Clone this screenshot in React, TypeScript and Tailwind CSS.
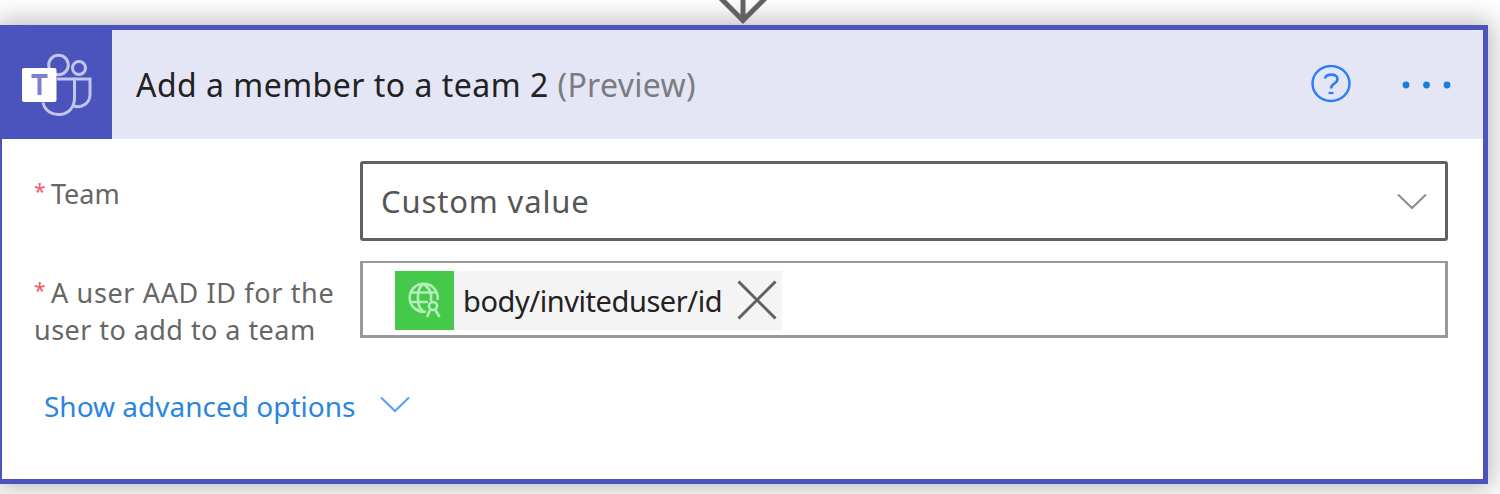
import type { ReactNode } from "react";

function TeamsIcon() {
  return (
    <svg className="h-[66px] w-[74px]" viewBox="0 0 74 66" fill="none">
      <g stroke="#c3c6eb" strokeWidth="3">
        <circle cx="37.500" cy="13" r="9.800" />
        <circle cx="58" cy="16" r="6.500" />
        <path d="M36 27h17.500v19c0 21-28 21.500-31.500 4.500" />
        <path d="M53.500 27H69v16a12 12 0 0 1-16 11" />
      </g>
      <rect x="1" y="16" width="34.500" height="34" rx="2" fill="#fff" />
      <path d="M10.500 24h16M18.500 24v19" stroke="#7b80d0" strokeWidth="4" />
    </svg>
  );
}

function GlobeIcon() {
  return (
    <svg className="h-[37px] w-[34px]" viewBox="0 0 34 37" fill="none" stroke="#b6eeba" strokeWidth="2.600">
      <path d="M18 29.500A14 14 0 1 1 29.500 18" />
      <path d="M15.500 29.500C8 25 8 6 15.500 2c7 4 8.500 10 7.500 17M3 10.500h25M3 20h17" />
      <circle cx="25" cy="24" r="4" />
      <path d="M22 28l-3 7M27.500 28l4 7" />
    </svg>
  );
}

function Chevron({ className }: { className: string }) {
  return (
    <svg className={className} viewBox="0 0 32 17" fill="none" stroke="currentColor" strokeWidth="2">
      <path d="M2 1.500 16 15 30 1.500" />
    </svg>
  );
}

function FieldLabel({ children }: { children: ReactNode }) {
  return (
    <div className="w-[326px] shrink-0 whitespace-nowrap text-[27px] leading-[37px] text-[#666]">
      <span className="mr-[5px] inline-block w-[12px] -translate-y-[5px] text-[21px] leading-none text-[#ee5a68]">*</span>
      {children}
    </div>
  );
}

export default function App() {
  return (
    <main className="flex h-[494px] w-[1500px] flex-col overflow-hidden bg-white font-['Noto_Sans','Open_Sans',sans-serif]">
      <div className="flex h-[25px] shrink-0 justify-center pr-[15px]">
        <svg className="relative z-10 h-[25px] w-[60px]" viewBox="0 0 60 25" fill="none" stroke="#626262" strokeWidth="5">
          <path d="M30 0v21M6-3.500l24 24L54-3.500" />
        </svg>
      </div>
      <section className="h-[459px] w-[1488px] shrink-0 border-[5px] border-l-2 border-[#4b53bc] bg-white shadow-[0_0_25px_4px_rgba(0,0,0,0.28)]">
        <header className="flex h-[109px] items-center bg-[#e4e6f5]">
          <div className="flex h-full w-[110px] items-center bg-[#4b53bc] pl-[19px]">
            <TeamsIcon />
          </div>
          <h1 className="ml-[24px] flex-1 whitespace-nowrap text-[32px] leading-[44px] tracking-[0.480px] text-[#222]">
            Add a member to a team 2 <span className="tracking-[0.300px] text-[#7b7b80]">(Preview)</span>
          </h1>
          <svg className="mb-[2px] mr-[50px] h-[38px] w-[40px]" viewBox="0 0 40 38" fill="none" stroke="#2b7cff">
            <ellipse cx="20" cy="18.500" rx="18.500" ry="17.500" strokeWidth="2.400" />
            <path d="M14 13.500c1-5 12.500-5.500 12.500.5 0 5-6.500 4-6.500 9.500" strokeWidth="2.600" />
            <path d="M17.500 28h5" strokeWidth="2.200" />
          </svg>
          <svg className="mr-[32px] h-[8px] w-[50px]" viewBox="0 0 50 8" fill="#1680dc">
            <circle cx="5" cy="4" r="3.400" />
            <circle cx="25.500" cy="4" r="3.400" />
            <circle cx="46" cy="4" r="3.400" />
          </svg>
        </header>
        <div className="flex flex-col pl-[32px] pt-[22px]">
          <div className="flex h-[100px]">
            <div className="pt-[14px]">
              <FieldLabel>Team</FieldLabel>
            </div>
            <div className="flex h-[80px] w-[1088px] items-center justify-between rounded-[3px] border-[3px] border-[#606060] pl-[18px] pr-[17px]">
              <span className="text-[31px] leading-[42px] tracking-[0.850px] text-[#555]">Custom value</span>
              <Chevron className="h-[17px] w-[32px] text-[#8d8d8d]" />
            </div>
          </div>
          <div className="flex h-[95px]">
            <div className="pt-[13px]">
              <FieldLabel>
                <span className="tracking-[0.640px]">A user AAD ID for the</span>
                <br />
                <span className="tracking-[0.450px]">user to add to a team</span>
              </FieldLabel>
            </div>
            <div className="h-[77px] w-[1088px] border-[3px] border-t-2 border-[#999] pl-[32px] pt-[8px]">
              <div className="flex h-[59px] w-[387px] items-center bg-[#f4f4f4]">
                <div className="flex h-full w-[59px] items-center justify-center bg-[#44c94b]">
                  <GlobeIcon />
                </div>
                <span className="ml-[9px] flex-1 whitespace-nowrap text-[29px] leading-[40px] tracking-[-0.430px] text-[#222]">body/inviteduser/id</span>
                <svg className="mb-[1px] mr-[5px] h-[40px] w-[40px]" viewBox="0 0 40 40" stroke="#606060" strokeWidth="3">
                  <path d="M1.500 1.500 38.500 38.500M38.500 1.500 1.500 38.500" />
                </svg>
              </div>
            </div>
          </div>
          <div className="flex items-center pl-[10px] pt-[30px]">
            <span className="w-[335px] whitespace-nowrap text-[28px] leading-[40px] text-[#2a86dc]">Show advanced options</span>
            <Chevron className="mb-[4px] h-[17px] w-[32px] text-[#5a9cf5]" />
          </div>
        </div>
      </section>
    </main>
  );
}
